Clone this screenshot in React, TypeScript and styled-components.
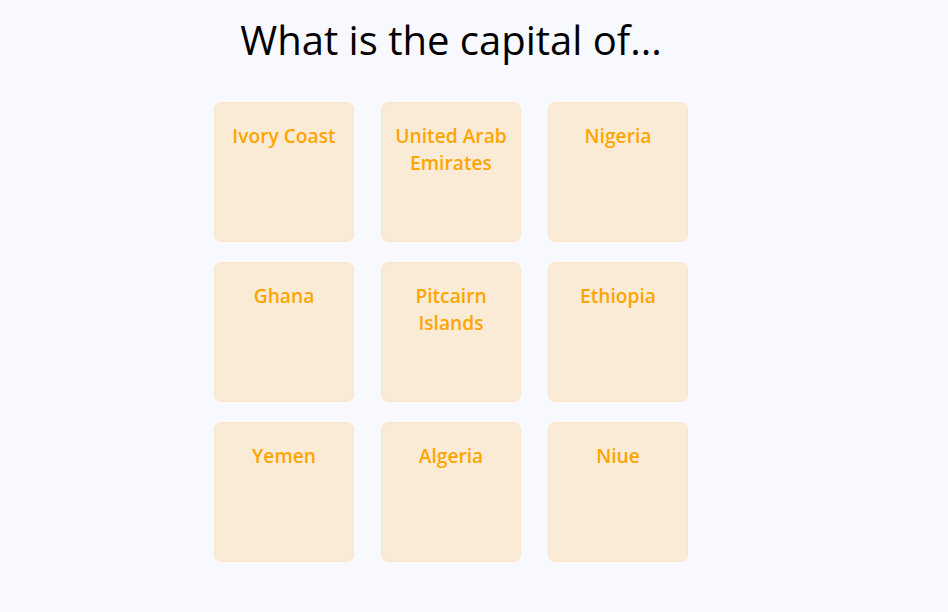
import React from "react";
import styled, { createGlobalStyle } from "styled-components";

const Global = createGlobalStyle`
  body {
    margin: 0;
    background: #f8f8ff;
    font-family: "Open Sans", "Noto Sans", sans-serif;
  }
`;

const Page = styled.main`
  width: 902px;
  display: flex;
  flex-direction: column;
  align-items: center;
`;

const Title = styled.h1`
  margin: 13px 0 35px;
  font-size: 40px;
  font-weight: 400;
  line-height: 54px;
  color: #000;
`;

const Grid = styled.div`
  display: grid;
  grid-template-columns: repeat(3, 140px);
  column-gap: 27px;
  row-gap: 20px;
`;

const Card = styled.button`
  width: 140px;
  height: 140px;
  box-sizing: border-box;
  background: #faebd7;
  border: 1px solid #f8e4c6;
  border-radius: 8px;
  padding: 19px 8px 0;
  display: flex;
  justify-content: center;
  align-items: flex-start;
  font-family: "Open Sans", "Noto Sans", sans-serif;
  font-size: 19.2px;
  font-weight: 600;
  line-height: 27px;
  color: #ffa500;
  text-align: center;
  cursor: pointer;
`;

const countries = [
  "Ivory Coast",
  "United Arab Emirates",
  "Nigeria",
  "Ghana",
  "Pitcairn Islands",
  "Ethiopia",
  "Yemen",
  "Algeria",
  "Niue",
];

export default function App() {
  return (
    <>
      <Global />
      <Page>
        <Title>What is the capital of...</Title>
        <Grid>
          {countries.map((c) => (
            <Card key={c}>{c}</Card>
          ))}
        </Grid>
      </Page>
    </>
  );
}
